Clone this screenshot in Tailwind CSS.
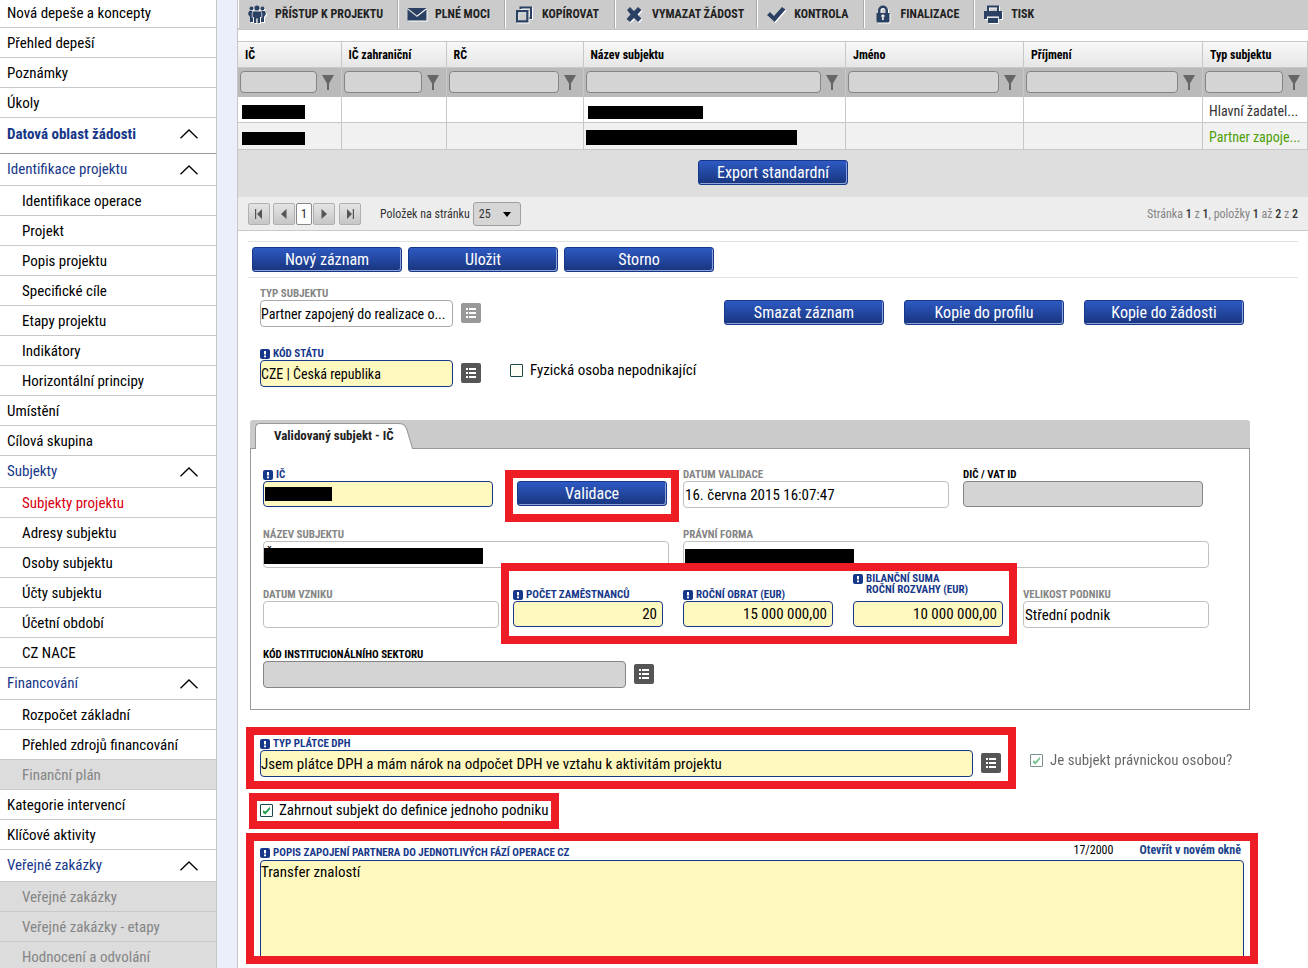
<!DOCTYPE html>
<html lang="cs">
<head>
<meta charset="utf-8">
<title>Subjekty projektu</title>
<script src="https://cdn.jsdelivr.net/npm/@tailwindcss/browser@4"></script>
</head>
<body class="bg-white text-black font-['Roboto_Condensed','Liberation_Sans_Narrow',Roboto,sans-serif] text-[15px] leading-5">
<svg class="hidden" aria-hidden="true">
  <symbol id="chev" viewBox="0 0 18 10"><path d="M.5 9.3 9 1l8.500 8.300" fill="none" stroke="currentColor" stroke-width="1.300"/></symbol>
  <symbol id="funnel" viewBox="0 0 12 15"><path d="M0 0h12L7 8.500V15H5V8.500z" fill="currentColor"/></symbol>
  <symbol id="list" viewBox="0 0 20 20"><path d="M5 5h2v2H5zM8 5h7v2H8zM5 9h2v2H5zM8 9h7v2H8zM5 13h2v2H5zM8 13h7v2H8z" fill="#fff"/></symbol>
  <symbol id="req" viewBox="0 0 10 10"><rect width="10" height="10" rx="2" fill="#17388a"/><path d="M4 2h2v3.500H4zM4 6.500h2v1.700H4z" fill="#fff"/></symbol>
  <symbol id="tick" viewBox="0 0 13 13"><path d="M3 6.200v2.600l2.400 1.800L10 5.200V2.800L5.400 7.600z" fill="#1ea04a"/></symbol>
</svg>
<div class="flex h-screen overflow-hidden">
  <nav class="w-[217px] shrink-0 border-r border-[#c6c6c6]">
    <ul class="[&>li]:border-b [&>li]:border-[#c9c9c9]">
      <li><a href="#" class="flex h-[27px] items-center pb-[2px] pl-[7px]">Nová depeše a koncepty</a></li>
      <li><a href="#" class="flex h-[29px] items-center pl-[7px]">Přehled depeší</a></li>
      <li><a href="#" class="flex h-[29px] items-center pl-[7px]">Poznámky</a></li>
      <li><a href="#" class="flex h-[29px] items-center pl-[7px]">Úkoly</a></li>
      <li class="border-[#999]!"><button class="flex h-[35px] w-full items-center justify-between pr-[18px] pb-1 pl-[7px] font-bold text-[#17388a]">Datová oblast žádosti<svg class="h-[10px] w-[18px] text-black"><use href="#chev"/></svg></button></li>
      <li><button class="flex h-[31px] w-full items-center justify-between pr-[18px] pb-[2px] pl-[7px] text-[#17388a]">Identifikace projektu<svg class="mt-[2px] h-[10px] w-[18px] text-black"><use href="#chev"/></svg></button></li>
      <li><a href="#" class="flex h-[29px] items-center pl-[22px]">Identifikace operace</a></li>
      <li><a href="#" class="flex h-[29px] items-center pl-[22px]">Projekt</a></li>
      <li><a href="#" class="flex h-[29px] items-center pl-[22px]">Popis projektu</a></li>
      <li><a href="#" class="flex h-[29px] items-center pl-[22px]">Specifické cíle</a></li>
      <li><a href="#" class="flex h-[29px] items-center pl-[22px]">Etapy projektu</a></li>
      <li><a href="#" class="flex h-[29px] items-center pl-[22px]">Indikátory</a></li>
      <li><a href="#" class="flex h-[29px] items-center pl-[22px]">Horizontální principy</a></li>
      <li><a href="#" class="flex h-[29px] items-center pl-[7px]">Umístění</a></li>
      <li><a href="#" class="flex h-[29px] items-center pl-[7px]">Cílová skupina</a></li>
      <li><button class="flex h-[31px] w-full items-center justify-between pr-[18px] pb-[2px] pl-[7px] text-[#17388a]">Subjekty<svg class="mt-[2px] h-[10px] w-[18px] text-black"><use href="#chev"/></svg></button></li>
      <li><a href="#" aria-current="page" class="flex h-[29px] items-center pl-[22px] text-[#d80012]">Subjekty projektu</a></li>
      <li><a href="#" class="flex h-[29px] items-center pl-[22px]">Adresy subjektu</a></li>
      <li><a href="#" class="flex h-[29px] items-center pl-[22px]">Osoby subjektu</a></li>
      <li><a href="#" class="flex h-[29px] items-center pl-[22px]">Účty subjektu</a></li>
      <li><a href="#" class="flex h-[29px] items-center pl-[22px]">Účetní období</a></li>
      <li><a href="#" class="flex h-[29px] items-center pl-[22px]">CZ NACE</a></li>
      <li><button class="flex h-[31px] w-full items-center justify-between pr-[18px] pb-[2px] pl-[7px] text-[#17388a]">Financování<svg class="mt-[2px] h-[10px] w-[18px] text-black"><use href="#chev"/></svg></button></li>
      <li><a href="#" class="flex h-[29px] items-center pl-[22px]">Rozpočet základní</a></li>
      <li><a href="#" class="flex h-[29px] items-center pl-[22px]">Přehled zdrojů financování</a></li>
      <li class="bg-[#dcdcdc]"><a href="#" class="flex h-[29px] items-center pl-[22px] text-[#858585]">Finanční plán</a></li>
      <li><a href="#" class="flex h-[29px] items-center pl-[7px]">Kategorie intervencí</a></li>
      <li><a href="#" class="flex h-[29px] items-center pl-[7px]">Klíčové aktivity</a></li>
      <li><button class="flex h-[31px] w-full items-center justify-between pr-[18px] pb-[2px] pl-[7px] text-[#17388a]">Veřejné zakázky<svg class="mt-[2px] h-[10px] w-[18px] text-black"><use href="#chev"/></svg></button></li>
      <li class="bg-[#dcdcdc]"><a href="#" class="flex h-[29px] items-center pl-[22px] text-[#858585]">Veřejné zakázky</a></li>
      <li class="bg-[#dcdcdc]"><a href="#" class="flex h-[29px] items-center pl-[22px] text-[#858585]">Veřejné zakázky - etapy</a></li>
      <li class="bg-[#dcdcdc]"><a href="#" class="flex h-[29px] items-center pl-[22px] text-[#858585]">Hodnocení a odvolání</a></li>
    </ul>
  </nav>
  <div class="w-5 shrink-0 bg-[#ebeffc]"></div>
  <main class="min-w-0 flex-1 border-l border-[#c6c6cc]">
    <div class="flex h-[30px] border-b border-[#c4c4c4] bg-[#cbcbcb] pb-px text-xs font-bold text-[#222] [&>button]:flex [&>button]:items-center [&>button]:gap-2 [&>button]:border-l [&>button]:border-white [&>button]:pl-2 [&>button]:whitespace-nowrap [&_svg]:h-5 [&_svg]:w-5 [&_svg]:fill-[#2b4163] [&_svg]:drop-shadow-[1px_1px_0_#fff]">
      <button class="pr-[15px] shadow-[inset_-1px_0_#aaa]"><svg viewBox="0 0 20 20"><circle cx="10" cy="4" r="2.600"/><circle cx="4.500" cy="4.500" r="2"/><circle cx="15.500" cy="4.500" r="2"/><path d="M6.500 7.500h7l1 1v4.500h-1.500v6h-2.300v-4.500h-1.400v4.500H7v-6H5.500V8.500zM2 7h3.500L4.800 9v4.500H6V18H3v-5l-2-3zM18 7h-3.500l.700 2v4.500H14V18h3v-5l2-3z"/></svg>PŘÍSTUP K PROJEKTU</button>
      <button class="pr-[15px] shadow-[inset_-1px_0_#aaa]"><svg viewBox="0 0 20 20"><path d="M.500 4h19L10 11.500zM.500 5.500 10 13l9.500-7.500V16.500H.500z"/></svg>PLNÉ MOCI</button>
      <button class="pr-4 shadow-[inset_-1px_0_#aaa]"><svg viewBox="0 0 20 20"><path fill-rule="evenodd" d="M2 6h12.500v12.500H2zM4.200 8.200v8.100h8.100V8.200zM5.500 2.500H18v12.500h-2.500v-2h.500V4.500H7.500V5h-2z"/></svg>KOPÍROVAT</button>
      <button class="pr-[13px] shadow-[inset_-1px_0_#aaa]"><svg viewBox="0 0 20 20"><path d="M3 6l3-3 4 4 4-4 3.500 3-4 4.500 4 4-3.500 3.500-4-4-4 4L2.500 15l4-4.500z"/></svg>VYMAZAT ŽÁDOST</button>
      <button class="pr-[15px] shadow-[inset_-1px_0_#aaa]"><svg viewBox="0 0 20 20"><path d="M1 11l3-3 4 4L16 3l3.500 2.500L8.500 18z"/></svg>KONTROLA</button>
      <button class="pr-[15px] shadow-[inset_-1px_0_#aaa]"><svg viewBox="0 0 20 20"><path fill-rule="evenodd" d="M3.500 9H5V6.500a5 5 0 0 1 10 0V9h1.500v8q0 1.500-1.500 1.500H5q-1.500 0-1.500-1.500zM7.500 9h5V6.500a2.500 2.500 0 0 0-5 0zM10 10.500a1.600 1.600 0 0 0-.900 3V16h1.800v-2.500a1.600 1.600 0 0 0-.900-3z"/></svg>FINALIZACE</button>
      <button class="pr-[15px]"><svg viewBox="0 0 20 20"><path fill-rule="evenodd" d="M4 1.500h12V7h3v8h-3v-2.500H4V15H1V7h3zM6 3.500V7h8V3.500zM5 14h10v5H5z"/></svg>TISK</button>
    </div>

    <table class="mt-[11px] w-full table-fixed border-collapse border-t border-b border-[#c8c8c8] text-sm [&_td]:border-r [&_td]:border-[#c8c8c8] [&_td]:p-0 [&_th]:border-r [&_th]:border-[#c8c8c8]">
      <colgroup><col class="w-[103px]"><col class="w-[105px]"><col class="w-[137px]"><col><col class="w-[178px]"><col class="w-[179px]"><col class="w-[105px]"></colgroup>
      <thead>
        <tr class="h-[26px] border-b border-[#c8c8c8] bg-linear-to-b from-[#f8f8f8] to-[#e6e6e6] text-left text-xs font-bold [&>th]:pl-[7px]"><th>IČ</th><th>IČ zahraniční</th><th>RČ</th><th>Název subjektu</th><th>Jméno</th><th>Příjmení</th><th>Typ subjektu</th></tr>
        <tr class="h-[29px] bg-[#bababa] text-[#666] [&_div]:flex [&_div]:items-center [&_div]:gap-[5px] [&_div]:pr-[7px] [&_div]:pl-[2px] [&_input]:h-[22px] [&_input]:w-0 [&_input]:flex-1 [&_input]:rounded-[4px] [&_input]:border [&_input]:border-[#858585] [&_input]:bg-[#d4d4d4] [&_svg]:h-[15px] [&_svg]:w-3">
          <td><div><input aria-label="IČ"><button aria-label="Filtr"><svg><use href="#funnel"/></svg></button></div></td>
          <td><div><input aria-label="IČ zahraniční"><button aria-label="Filtr"><svg><use href="#funnel"/></svg></button></div></td>
          <td><div><input aria-label="RČ"><button aria-label="Filtr"><svg><use href="#funnel"/></svg></button></div></td>
          <td><div><input aria-label="Název subjektu"><button aria-label="Filtr"><svg><use href="#funnel"/></svg></button></div></td>
          <td><div><input aria-label="Jméno"><button aria-label="Filtr"><svg><use href="#funnel"/></svg></button></div></td>
          <td><div><input aria-label="Příjmení"><button aria-label="Filtr"><svg><use href="#funnel"/></svg></button></div></td>
          <td><div><input aria-label="Typ subjektu"><button aria-label="Filtr"><svg><use href="#funnel"/></svg></button></div></td>
        </tr>
      </thead>
      <tbody>
        <tr class="h-[26px] border-b border-[#c8c8c8]"><td><div class="mt-[6px] ml-1 h-[14px] w-[63px] bg-black"></div></td><td></td><td></td><td><div class="mt-[6px] ml-1 h-[13px] w-[115px] bg-black"></div></td><td></td><td></td><td><span class="block truncate pt-1 pl-[6px] text-[#333]">Hlavní žadatel...</span></td></tr>
        <tr class="h-[27px] bg-[#f1f1f1]"><td><div class="mt-1 ml-1 h-[13px] w-[63px] bg-black"></div></td><td></td><td></td><td><div class="mt-[2px] ml-[2px] h-[15px] w-[211px] bg-black"></div></td><td></td><td></td><td><span class="block truncate pt-[2px] pl-[6px] text-[#4c9f05]">Partner zapoje...</span></td></tr>
      </tbody>
    </table>
    <div class="flex h-[47px] items-start justify-center bg-[#dedede] pt-[10px]">
      <button class="h-[25px] w-[150px] rounded-[3px] border border-[#17388a] bg-linear-to-b from-[#2e5ac4] to-[#18357e] text-base text-white shadow-[inset_-1px_-1px_#8fa3d4]">Export standardní</button>
    </div>
    <div class="flex h-[34px] items-center border-b border-[#c8c8c8] bg-[#ededed] px-[10px] text-xs text-[#333]">
      <div class="flex items-center [&>button]:flex [&>button]:size-[22px] [&>button]:items-center [&>button]:justify-center [&>button]:rounded-[2px] [&>button]:border [&>button]:border-[#b0b0b0] [&>button]:bg-linear-to-b [&>button]:from-[#e4e4e4] [&>button]:to-[#c6c6c6] [&_svg]:size-[10px] [&_svg]:fill-[#555]">
        <button aria-label="První stránka"><svg viewBox="0 0 10 10"><path d="M1 0h1.200v10H1zM8 0v10L3 5z"/></svg></button>
        <button aria-label="Předchozí stránka" class="ml-[3px]"><svg viewBox="0 0 10 10"><path d="M7.500 0v10L2 5z"/></svg></button>
        <input aria-label="Stránka" value="1" class="mx-px h-[22px] w-4 rounded-[2px] border border-[#888] bg-white text-center text-[13px]">
        <button aria-label="Další stránka"><svg viewBox="0 0 10 10"><path d="M2.500 0v10L8 5z"/></svg></button>
        <button aria-label="Poslední stránka" class="ml-1"><svg viewBox="0 0 10 10"><path d="M9 0H7.800v10H9zM2 0v10l5-5z"/></svg></button>
      </div>
      <label for="pagesize" class="ml-[19px]">Položek na stránku</label>
      <div class="relative ml-[3px]">
        <select id="pagesize" class="block h-6 w-12 appearance-none rounded-[3px] border border-[#a0a0a0] bg-[#d6d6d6] pl-[5px]"><option>25</option></select>
        <svg class="pointer-events-none absolute top-[10px] right-[10px] h-[5px] w-2" viewBox="0 0 8 5"><path d="M0 0h8L4 5z"/></svg>
      </div>
      <p class="ml-auto text-[#858585] [&>b]:font-medium [&>b]:text-[#333]">Stránka <b>1</b> z <b>1</b>, položky <b>1</b> až <b>2</b> z <b>2</b></p>
    </div>

    <div class="mx-[10px] mt-[10px] flex h-[37px] items-center gap-[6px] border-y border-[#e2e2e2] pl-1 [&>button]:h-[25px] [&>button]:w-[150px] [&>button]:rounded-[3px] [&>button]:border [&>button]:border-[#17388a] [&>button]:bg-linear-to-b [&>button]:from-[#2e5ac4] [&>button]:to-[#18357e] [&>button]:text-base [&>button]:text-white [&>button]:shadow-[inset_-1px_-1px_#8fa3d4]">
      <button>Nový záznam</button><button>Uložit</button><button>Storno</button>
    </div>

    <form class="pr-[58px] pl-3 [&_label]:flex [&_label]:items-center [&_label[for]]:pt-[2px]">
      <div class="flex items-start pt-2 pr-[6px] pl-[10px]">
        <div>
          <label for="typ" class="h-[14px] text-[11px] font-bold text-[#858585]">TYP SUBJEKTU</label>
          <input id="typ" readonly value="Partner zapojený do realizace o..." class="block h-[27px] w-[193px] rounded-[4px] border border-[#aaa] text-sm">
        </div>
        <button type="button" aria-label="Vybrat" class="mt-[17px] ml-2 size-5 rounded-[2px] bg-[#999]"><svg class="size-5"><use href="#list"/></svg></button>
        <div class="mt-[14px] ml-auto flex gap-5 [&>button]:h-[25px] [&>button]:w-[160px] [&>button]:rounded-[3px] [&>button]:border [&>button]:border-[#17388a] [&>button]:bg-linear-to-b [&>button]:from-[#2e5ac4] [&>button]:to-[#18357e] [&>button]:text-base [&>button]:text-white [&>button]:shadow-[inset_-1px_-1px_#8fa3d4]">
          <button type="button">Smazat záznam</button><button type="button">Kopie do profilu</button><button type="button">Kopie do žádosti</button>
        </div>
      </div>
      <div class="mt-[19px] flex items-start pl-[10px]">
        <div>
          <label for="stat" class="h-[14px] gap-[3px] text-[11px] font-bold text-[#17388a]"><svg class="size-[10px]"><use href="#req"/></svg>KÓD STÁTU</label>
          <input id="stat" value="CZE | Česká republika" class="block h-[27px] w-[193px] rounded-[4px] border border-[#17388a] bg-[#fff9bf] text-sm">
        </div>
        <button type="button" aria-label="Vybrat" class="mt-[17px] ml-2 size-5 rounded-[2px] bg-[#555]"><svg class="size-5"><use href="#list"/></svg></button>
        <label class="mt-[14px] ml-[29px] gap-[7px]"><input type="checkbox" class="size-[13px] appearance-none rounded-[1px] border border-[#1d4848] bg-[#fffef5]">Fyzická osoba nepodnikající</label>
      </div>

      <section class="mt-[33px]">
        <div class="flex h-7 items-end rounded-t-[3px] bg-[#cbcbcb] pl-1">
          <button type="button" class="relative h-[25px] pr-5 pl-5 text-[13px] font-bold text-[#222]">
            <svg class="absolute top-0 left-0 h-[26px] w-full" viewBox="0 0 159 26" preserveAspectRatio="none"><path d="M1.500 26V5Q1.500 .500 6 .500H144Q150 .500 152 6L158 26" fill="#fff" stroke="#999"/></svg>
            <span class="relative">Validovaný subjekt - IČ</span>
          </button>
        </div>
        <div class="border border-[#999] px-3 pt-[18px] pb-[21px]">
          <div class="flex h-[60px] items-start">
            <div class="relative">
              <label for="ic" class="h-[14px] gap-[3px] text-[11px] font-bold text-[#17388a]"><svg class="size-[10px]"><use href="#req"/></svg>IČ</label>
              <input id="ic" class="block h-[26px] w-[230px] rounded-[4px] border border-[#17388a] bg-[#fff9bf]">
              <div class="absolute top-5 left-[2px] h-[14px] w-[67px] bg-black"></div>
            </div>
            <div class="relative mt-[14px] ml-6">
              <button type="button" class="block h-[25px] w-[150px] rounded-[3px] border border-[#17388a] bg-linear-to-b from-[#2e5ac4] to-[#18357e] text-base text-white shadow-[inset_-1px_-1px_#8fa3d4]">Validace</button>
              <div class="pointer-events-none absolute -inset-x-3 -top-[11px] -bottom-4 border-8 border-[#ee1c24]"></div>
            </div>
            <div class="ml-4">
              <label for="dv" class="h-[14px] text-[11px] font-bold text-[#858585]">DATUM VALIDACE</label>
              <input id="dv" readonly value="16. června 2015 16:07:47" class="block h-[27px] w-[266px] rounded-[4px] border border-[#c0c0c0] pl-[1px]">
            </div>
            <div class="ml-[14px]">
              <label for="dic" class="h-[14px] text-[11px] font-bold">DIČ / VAT ID</label>
              <input id="dic" disabled class="block h-[26px] w-[240px] rounded-[4px] border border-[#858585] bg-[#d4d4d4]">
            </div>
          </div>
          <div class="flex h-[60px] items-start gap-[14px]">
            <div class="relative">
              <label for="naz" class="h-[14px] text-[11px] font-bold text-[#858585]">NÁZEV SUBJEKTU</label>
              <input id="naz" readonly value="Č" class="block h-[27px] w-[406px] rounded-[4px] border border-[#c0c0c0] pl-[1px]">
              <div class="absolute top-[21px] left-px h-4 w-[219px] bg-black"></div>
            </div>
            <div class="relative">
              <label for="pf" class="h-[14px] text-[11px] font-bold text-[#858585]">PRÁVNÍ FORMA</label>
              <input id="pf" readonly class="block h-[27px] w-[526px] rounded-[4px] border border-[#c0c0c0]">
              <div class="absolute top-[22px] left-[2px] h-[14px] w-[169px] bg-black"></div>
            </div>
          </div>
          <div class="flex h-[60px] items-start">
            <div>
              <label for="vznik" class="h-[14px] text-[11px] font-bold text-[#858585]">DATUM VZNIKU</label>
              <input id="vznik" readonly class="block h-[27px] w-[236px] rounded-[4px] border border-[#c0c0c0]">
            </div>
            <div class="relative ml-[14px] flex gap-5 [&_input]:h-[26px] [&_input]:w-[150px] [&_input]:rounded-[4px] [&_input]:border [&_input]:border-[#17388a] [&_input]:bg-[#fff9bf] [&_input]:pr-[5px] [&_input]:text-right [&_label]:h-[14px] [&_label]:gap-[3px] [&_label]:text-[11px] [&_label]:font-bold [&_label]:text-[#17388a]">
              <div><label for="pz"><svg class="size-[10px]"><use href="#req"/></svg>POČET ZAMĚSTNANCŮ</label><input id="pz" value="20" class="block"></div>
              <div><label for="ro"><svg class="size-[10px]"><use href="#req"/></svg>ROČNÍ OBRAT (EUR)</label><input id="ro" value="15 000 000,00" class="block"></div>
              <div class="-mt-[14px]"><label for="bs" class="h-7! items-start! pt-0! leading-[11px]"><svg class="mt-px size-[10px]"><use href="#req"/></svg><span><span class="block">BILANČNÍ SUMA</span><span class="block">ROČNÍ ROZVAHY (EUR)</span></span></label><input id="bs" value="10 000 000,00" class="block"></div>
              <div class="pointer-events-none absolute -top-6 -right-[14px] -bottom-[17px] -left-3 border-8 border-[#ee1c24]"></div>
            </div>
            <div class="ml-5">
              <label for="vel" class="h-[14px] text-[11px] font-bold text-[#858585]">VELIKOST PODNIKU</label>
              <input id="vel" readonly value="Střední podnik" class="block h-[27px] w-[186px] rounded-[4px] border border-[#c0c0c0] pl-[1px]">
            </div>
          </div>
          <div class="flex items-start">
            <div>
              <label for="kis" class="h-[14px] text-[11px] font-bold">KÓD INSTITUCIONÁLNÍHO SEKTORU</label>
              <input id="kis" disabled class="block h-[27px] w-[363px] rounded-[4px] border border-[#858585] bg-[#d4d4d4]">
            </div>
            <button type="button" aria-label="Vybrat" class="mt-[17px] ml-2 size-5 rounded-[2px] bg-[#555]"><svg class="size-5"><use href="#list"/></svg></button>
          </div>
        </div>
      </section>

      <div class="mt-[26px] flex items-start pl-[10px]">
        <div class="relative flex items-start">
          <div>
            <label for="dph" class="h-[14px] gap-[3px] text-[11px] font-bold text-[#17388a]"><svg class="size-[10px]"><use href="#req"/></svg>TYP PLÁTCE DPH</label>
            <input id="dph" value="Jsem plátce DPH a mám nárok na odpočet DPH ve vztahu k aktivitám projektu" class="block h-[27px] w-[713px] rounded-[4px] border border-[#17388a] bg-[#fff9bf]">
          </div>
          <button type="button" aria-label="Vybrat" class="mt-[17px] ml-2 size-5 rounded-[2px] bg-[#555]"><svg class="size-5"><use href="#list"/></svg></button>
          <div class="pointer-events-none absolute -top-[9px] -right-[15px] -bottom-3 -left-[14px] border-8 border-[#ee1c24]"></div>
        </div>
        <label class="relative mt-[14px] ml-[29px] gap-[7px] opacity-60"><input type="checkbox" checked disabled class="peer size-[13px] appearance-none rounded-[1px] border border-[#1d4848]"><svg class="pointer-events-none absolute left-0 hidden size-[13px] peer-checked:block"><use href="#tick"/></svg>Je subjekt právnickou osobou?</label>
      </div>
      <div class="mt-[23px] flex pl-[10px]">
        <div class="relative">
          <label class="gap-[6px]"><input type="checkbox" checked class="peer size-[13px] appearance-none rounded-[1px] border border-[#1d4848]"><svg class="pointer-events-none absolute left-0 hidden size-[13px] peer-checked:block"><use href="#tick"/></svg>Zahrnout subjekt do definice jednoho podniku</label>
          <div class="pointer-events-none absolute -top-[7px] -right-[10px] -bottom-[9px] -left-[11px] border-8 border-[#ee1c24]"></div>
        </div>
      </div>
      <div class="relative mt-[20px] mr-[6px] ml-[10px]">
        <div class="flex h-5 items-center">
          <label for="popis" class="mt-[3px] gap-[3px] text-[11px] font-bold text-[#17388a]"><svg class="size-[10px]"><use href="#req"/></svg>POPIS ZAPOJENÍ PARTNERA DO JEDNOTLIVÝCH FÁZÍ OPERACE CZ</label>
          <span class="ml-auto text-xs">17/2000</span>
          <a href="#" class="mr-[3px] ml-[26px] text-xs font-bold text-[#1b438c]">Otevřít v novém okně</a>
        </div>
        <textarea id="popis" class="block h-[100px] w-full resize-none rounded-[4px] border border-[#17388a] bg-[#fff9bf] pt-px">Transfer znalostí</textarea>
        <div class="pointer-events-none absolute -top-[7px] -right-[14px] -bottom-1 -left-[14px] border-8 border-[#ee1c24]"></div>
      </div>
    </form>
  </main>
</div>
</body>
</html>
